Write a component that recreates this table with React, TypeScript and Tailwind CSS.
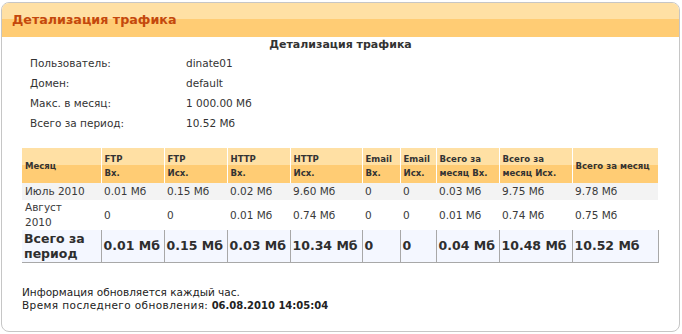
import React from "react";

// ── Data ──────────────────────────────────────────────────────────────────────

const INFO = [
  ["Пользователь:", "dinate01"],
  ["Домен:", "default"],
  ["Макс. в месяц:", "1 000.00 Мб"],
  ["Всего за период:", "10.52 Мб"],
];

const COLS: { w: number; head: React.ReactNode }[] = [
  { w: 79, head: "Месяц" },
  { w: 63, head: <>FTP<br />Вх.</> },
  { w: 63, head: <>FTP<br />Исх.</> },
  { w: 63, head: <>HTTP<br />Вх.</> },
  { w: 72, head: <>HTTP<br />Исх.</> },
  { w: 38, head: <>Email<br />Вх.</> },
  { w: 36, head: <>Email<br />Исх.</> },
  { w: 63, head: <>Всего за<br />месяц Вх.</> },
  { w: 73, head: <>Всего за<br />месяц Исх.</> },
  { w: 86, head: "Всего за месяц" },
];

const ROWS: { cells: React.ReactNode[]; cls: string }[] = [
  {
    cls: "bg-[#f3f3f3] h-[17px]",
    cells: ["Июль 2010", "0.01 Мб", "0.15 Мб", "0.02 Мб", "9.60 Мб", "0", "0", "0.03 Мб", "9.75 Мб", "9.78 Мб"],
  },
  {
    cls: "bg-white h-[30px]",
    cells: [<>Август<br />2010</>, "0", "0", "0.01 Мб", "0.74 Мб", "0", "0", "0.01 Мб", "0.74 Мб", "0.75 Мб"],
  },
];

const TOTAL = [<>Всего за<br />период</>, "0.01 Мб", "0.15 Мб", "0.03 Мб", "10.34 Мб", "0", "0", "0.04 Мб", "10.48 Мб", "10.52 Мб"];

const BAND = "bg-[linear-gradient(to_bottom,#ffe0a4_0%,#ffe0a4_48%,#ffcc74_48%,#ffcc74_100%)]";

// ── Component ─────────────────────────────────────────────────────────────────

export default function App() {
  return (
    <div className="w-[682px] h-[334px] bg-white pt-[2px] px-[1px] font-['DejaVu_Sans',sans-serif] text-[#333]">
      <div className="h-[330px] w-[679px] rounded-[8px] border border-[#c6c6c6] overflow-hidden flex flex-col">

        {/* Header band */}
        <div className={`h-[34px] flex items-center pl-[10px] ${BAND}`}>
          <span className="text-[12.7px] font-bold text-[#c4480c] leading-none">
            Детализация трафика
          </span>
        </div>

        {/* Body */}
        <div className="flex flex-col px-[20px]">
          <div className="text-center text-[11px] font-bold leading-[14px] h-[14px] mt-[1px]">
            Детализация трафика
          </div>

          <div className="mt-[2px] pl-[8px] text-[10.5px]">
            {INFO.map(([k, v]) => (
              <div key={k} className="flex items-center h-[20px]">
                <span className="w-[156px]">{k}</span>
                <span>{v}</span>
              </div>
            ))}
          </div>

          <table className="mt-[14px] table-fixed border-collapse w-[636px]">
            <colgroup>
              {COLS.map((c, i) => <col key={i} style={{ width: c.w }} />)}
            </colgroup>
            <thead>
              <tr className={`h-[35px] ${BAND}`}>
                {COLS.map((c, i) => (
                  <th
                    key={i}
                    className="text-left align-middle font-bold text-[9.5px] leading-[14px] px-[3px] border-r border-white last:border-r-0 font-['DejaVu_Sans_Condensed','DejaVu_Sans',sans-serif]"
                  >
                    {c.head}
                  </th>
                ))}
              </tr>
            </thead>
            <tbody>
              {ROWS.map((r, ri) => (
                <tr key={ri} className={r.cls}>
                  {r.cells.map((c, i) => (
                    <td key={i} className="px-[3px] text-[10.5px] leading-[15px] align-middle whitespace-nowrap text-[#3a3a3a]">
                      {c}
                    </td>
                  ))}
                </tr>
              ))}
              <tr className="h-[32px] bg-[#f4f7ff]">
                {TOTAL.map((c, i) => (
                  <td
                    key={i}
                    className="px-[2px] text-[12.5px] font-bold leading-[15px] align-middle whitespace-nowrap border-b border-r border-[#a8a8a8] text-[#2e2e2e]"
                  >
                    {c}
                  </td>
                ))}
              </tr>
            </tbody>
          </table>

          <div className="mt-[23px] leading-[13px] text-[#222]">
            <div className="text-[10.5px]">Информация обновляется каждый час.</div>
            <div className="text-[10.5px]">
              <span className="tracking-[0.4px]">Время последнего обновления:</span>{" "}
              <b className="text-[10px]">06.08.2010 14:05:04</b>
            </div>
          </div>
        </div>
      </div>
    </div>
  );
}
